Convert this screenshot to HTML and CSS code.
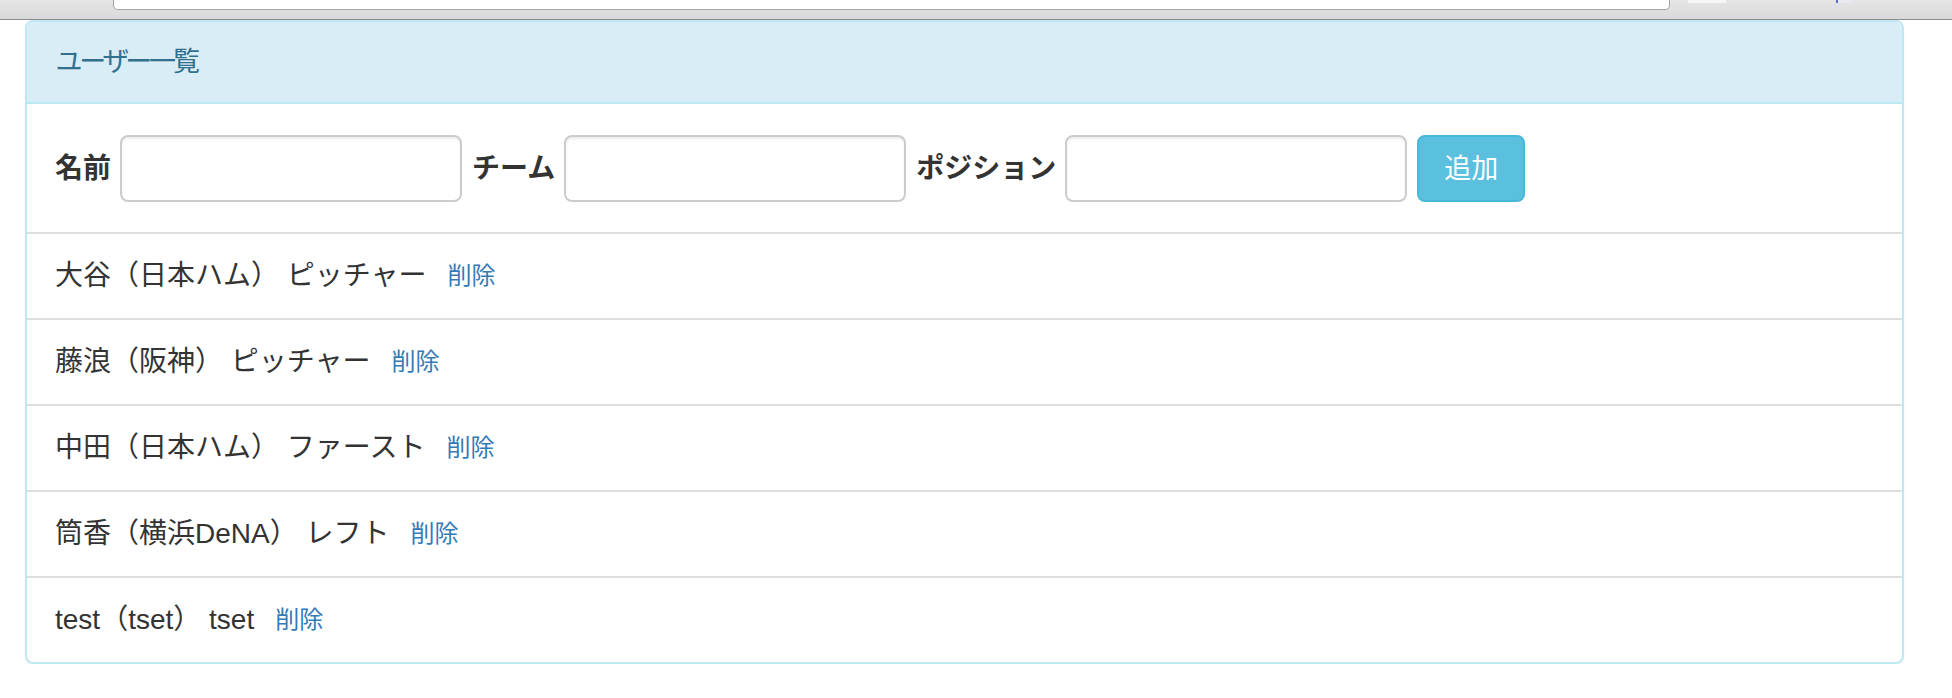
FILE: index.html
```html
<!DOCTYPE html>
<html lang="ja">
<head>
<meta charset="utf-8">
<title>ユーザー一覧</title>
<link rel="stylesheet" href="styles.css">
</head>
<body>
<div class="chrome">
  <div class="address"></div>
  <div class="chrome-item white"></div>
  <div class="chrome-item blue"></div>
</div>
<div class="panel">
  <div class="panel-heading"><span class="panel-title">ユーザー一覧</span></div>
  <form class="panel-form">
    <label class="field-label">名前</label>
    <input class="field-input" type="text">
    <label class="field-label">チーム</label>
    <input class="field-input" type="text">
    <label class="field-label">ポジション</label>
    <input class="field-input" type="text">
    <button class="btn-add" type="button">追加</button>
  </form>
  <ul class="list">
    <li class="list-item"><span>大谷（日本ハム） ピッチャー</span><a class="del" href="#">削除</a></li>
    <li class="list-item"><span>藤浪（阪神） ピッチャー</span><a class="del" href="#">削除</a></li>
    <li class="list-item"><span>中田（日本ハム） ファースト</span><a class="del" href="#">削除</a></li>
    <li class="list-item"><span>筒香（横浜DeNA） レフト</span><a class="del" href="#">削除</a></li>
    <li class="list-item"><span>test（tset） tset</span><a class="del" href="#">削除</a></li>
  </ul>
</div>
</body>
</html>
```

FILE: styles.css
```css
* { box-sizing: border-box; }
html, body {
  margin: 0;
  padding: 0;
  background: #fff;
  font-family: "Liberation Sans", "Noto Sans CJK JP", sans-serif;
  color: #333;
}
.chrome {
  height: 20px;
  background: linear-gradient(#e6e6e6, #d9d9d9);
  border-bottom: 1px solid #8c8c8c;
  display: flex;
  align-items: flex-start;
}
.address {
  margin-left: 113px;
  width: 1557px;
  height: 10px;
  background: #fff;
  border: 1px solid #a3a3a3;
  border-top: none;
  border-radius: 0 0 5px 5px;
}
.chrome-item { height: 3px; }
.chrome-item.white { margin-left: 18px; width: 38px; background: #f6f6f6; }
.chrome-item.blue { margin-left: 110px; width: 17px; background: linear-gradient(90deg, #5b6fd6 0 2px, #e9e9ef 2px); }

.panel {
  margin-left: 25px;
  width: 1879px;
  border: 2px solid #bce8f1;
  border-radius: 8px;
  box-shadow: 0 2px 2px rgba(0,0,0,.05);
  overflow: hidden;
}
.panel-heading {
  height: 82px;
  background: #d9edf7;
  border-bottom: 2px solid #bce8f1;
  color: #31708f;
  padding: 0 0 6px 29px;
  display: flex;
  align-items: center;
}
.panel-title {
  font-size: 27px;
  font-feature-settings: "palt";
  letter-spacing: -3px;
}
.panel-form {
  margin: 0;
  height: 128px;
  padding: 0 28px;
  display: flex;
  align-items: center;
  gap: 8px;
}
.field-label {
  font-weight: bold;
  font-size: 28px;
  margin-right: 1px;
  padding-bottom: 4px;
}
.field-input {
  width: 342px;
  height: 67px;
  border: 2px solid #ccc;
  border-radius: 8px;
  box-shadow: inset 0 2px 2px rgba(0,0,0,.075);
  background: #fff;
  margin-right: 2px;
}
.btn-add {
  width: 108px;
  height: 67px;
  background: #5bc0de;
  border: 2px solid #46b8da;
  border-radius: 8px;
  color: #fff;
  font-size: 27px;
  font-family: inherit;
  padding: 0 0 4px;
}
.list {
  list-style: none;
  margin: 0;
  padding: 0;
}
.list-item {
  height: 86px;
  border-top: 2px solid #ddd;
  padding: 0 28px 6px;
  display: flex;
  align-items: center;
  font-size: 28px;
}
.del {
  color: #337ab7;
  text-decoration: none;
  font-size: 24px;
  margin-left: 21px;
}
```
